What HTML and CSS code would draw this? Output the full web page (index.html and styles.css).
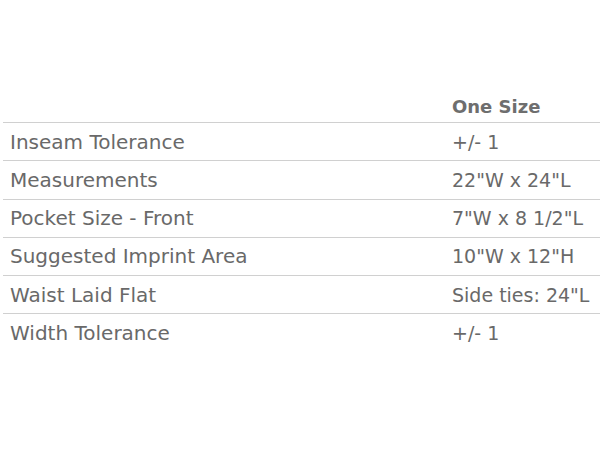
FILE: index.html
```html
<!DOCTYPE html>
<html>
<head>
<meta charset="utf-8">
<link rel="stylesheet" href="styles.css">
</head>
<body>
<table class="spec">
  <thead>
    <tr><th class="label"></th><th class="value">One Size</th></tr>
  </thead>
  <tbody>
    <tr><td class="label">Inseam Tolerance</td><td class="value">+/- 1</td></tr>
    <tr><td class="label">Measurements</td><td class="value">22"W x 24"L</td></tr>
    <tr><td class="label">Pocket Size - Front</td><td class="value">7"W x 8 1/2"L</td></tr>
    <tr><td class="label">Suggested Imprint Area</td><td class="value">10"W x 12"H</td></tr>
    <tr><td class="label">Waist Laid Flat</td><td class="value">Side ties: 24"L</td></tr>
    <tr><td class="label">Width Tolerance</td><td class="value">+/- 1</td></tr>
  </tbody>
</table>
</body>
</html>
```

FILE: styles.css
```css
html, body {
  margin: 0;
  padding: 0;
  background: #ffffff;
}
body {
  padding: 88px 0 0 3px;
  font-family: "DejaVu Sans", sans-serif;
  color: #696969;
}
.spec {
  width: 597px;
  border-collapse: collapse;
}
.spec th, .spec td {
  padding: 0 0 0 7px;
  height: 37.25px;
  text-align: left;
  vertical-align: middle;
  font-weight: normal;
}
.spec td.label {
  font-size: 20px;
}
.spec td.value {
  font-size: 19px;
}
.spec thead th {
  height: 31px;
  padding-top: 3px;
  font-size: 18px;
  font-weight: bold;
  color: #6e6e6e;
}
.spec .label {
  width: 435px;
}
.spec tbody tr {
  border-top: 1px solid #d0d0d0;
}
```
